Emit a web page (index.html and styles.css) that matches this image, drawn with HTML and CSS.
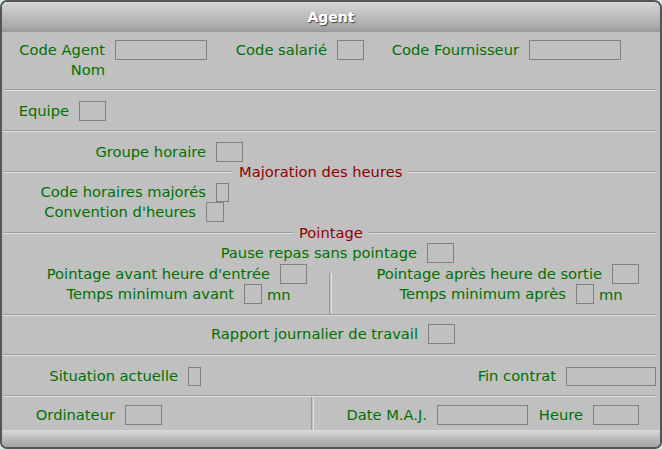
FILE: index.html
```html
<!DOCTYPE html>
<html lang="fr">
<head>
    <meta charset="UTF-8">
    <title>Agent</title>
    <link rel="stylesheet" href="styles.css">
</head>
<body>
    <div class="window">
        <div class="titlebar">Agent</div>

        <div class="section sec-ident">
            <div class="row">
                <span class="lbl w-agent">Code Agent</span><span class="box b-long"></span>
                <span class="lbl w-salarie">Code salarié</span><span class="box b-short"></span>
                <span class="lbl w-fourn">Code Fournisseur</span><span class="box b-long"></span>
            </div>
            <div class="row">
                <span class="lbl w-agent">Nom</span>
            </div>
        </div>
        <div class="sep"></div>

        <div class="section sec-equipe">
            <div class="row">
                <span class="lbl w-equipe">Equipe</span><span class="box b-short"></span>
            </div>
        </div>
        <div class="sep"></div>

        <div class="section sec-horaire">
            <div class="row">
                <span class="lbl w-groupe">Groupe horaire</span><span class="box b-short"></span>
            </div>
            <div class="legend">
                <div class="line l-major"></div><span class="legend-text">Majoration des heures</span><div class="line l-rest"></div>
            </div>
            <div class="row">
                <span class="lbl w-groupe">Code horaires majorés</span><span class="box b-tiny"></span>
            </div>
            <div class="row">
                <span class="lbl w-convention">Convention d'heures</span><span class="box b-mini"></span>
            </div>
            <div class="legend legend-tall">
                <div class="line l-point"></div><span class="legend-text">Pointage</span><div class="line l-rest"></div>
            </div>
            <div class="row">
                <span class="lbl w-pause">Pause repas sans pointage</span><span class="box b-short"></span>
            </div>
            <div class="cols">
                <div class="col col-left">
                    <div class="row row-tall">
                        <span class="lbl w-avant">Pointage avant heure d'entrée</span><span class="box b-short"></span>
                    </div>
                    <div class="row">
                        <span class="lbl w-minavant">Temps minimum avant</span><span class="box b-mini"></span><span class="unit">mn</span>
                    </div>
                </div>
                <div class="vdiv vdiv-point"></div>
                <div class="col">
                    <div class="row row-tall">
                        <span class="lbl w-apres">Pointage après heure de sortie</span><span class="box b-short"></span>
                    </div>
                    <div class="row">
                        <span class="lbl w-minapres">Temps minimum après</span><span class="box b-mini"></span><span class="unit">mn</span>
                    </div>
                </div>
            </div>
        </div>
        <div class="sep"></div>

        <div class="section sec-rapport">
            <div class="row">
                <span class="lbl w-rapport">Rapport journalier de travail</span><span class="box b-short"></span>
            </div>
        </div>
        <div class="sep"></div>

        <div class="section sec-situation">
            <div class="row">
                <span class="lbl w-situation">Situation actuelle</span><span class="box b-tiny"></span>
                <span class="lbl w-fin">Fin contrat</span><span class="box b-fin"></span>
            </div>
        </div>
        <div class="sep"></div>

        <div class="footer-row">
            <div class="foot-left">
                <span class="lbl w-ordi">Ordinateur</span><span class="box b-ordi"></span>
            </div>
            <div class="vdiv"></div>
            <div class="foot-right">
                <span class="lbl w-date">Date M.A.J.</span><span class="box b-date"></span>
                <span class="lbl w-heure">Heure</span><span class="box b-heure"></span>
            </div>
        </div>

        <div class="bottombar"></div>
    </div>
</body>
</html>
```

FILE: styles.css
```css
body {
    margin: 0;
    background-color: #d4ecec;
    font-family: "DejaVu Sans", Verdana, sans-serif;
    font-size: 14.7px;
}
.window {
    width: 662px;
    height: 449px;
    box-sizing: border-box;
    border: 2px solid #555;
    border-radius: 7px 8px 7px 7px;
    background-color: #c0c0c0;
    display: flex;
    flex-direction: column;
    overflow: hidden;
}
.titlebar {
    height: 30px;
    flex: none;
    line-height: 30px;
    text-align: center;
    font-weight: bold;
    font-size: 14px;
    color: #fff;
    text-shadow: 1px 1px 1px #444;
    background: linear-gradient(#d6d6d6, #a8a8a8 85%, #989898);
}
.section {
    flex: none;
    box-sizing: border-box;
}
.sec-ident {
    height: 57px;
    padding-top: 8px;
}
.sec-equipe {
    height: 39px;
    padding-top: 10px;
}
.sec-horaire {
    height: 182px;
    padding-top: 10px;
}
.sec-rapport {
    height: 38px;
    padding-top: 8px;
}
.sec-situation {
    height: 39px;
    padding-top: 10px;
}
.sep {
    flex: none;
    margin: 0 3px 0 2px;
    border-top: 1px solid #999;
    border-bottom: 1px solid #e2e2e2;
}
.row {
    display: flex;
    align-items: center;
    height: 20px;
}
.row-tall {
    height: 21px;
}
.lbl {
    color: #007000;
    text-align: right;
    white-space: nowrap;
    margin-right: 10px;
    line-height: 20px;
}
.box {
    box-sizing: border-box;
    height: 20px;
    border: 1px solid #808080;
    flex: none;
}
.unit {
    color: #007000;
    margin-left: 5px;
}

/* label widths */
.w-agent { width: 103px; }
.w-salarie { width: 120px; }
.w-fourn { width: 155px; }
.w-equipe { width: 67px; }
.w-groupe { width: 204px; }
.w-convention { width: 194px; }
.w-pause { width: 415px; }
.w-avant { width: 268px; }
.w-minavant { width: 232px; }
.w-apres { width: 270px; }
.w-minapres { width: 234px; }
.w-rapport { width: 416px; }
.w-situation { width: 176px; }
.w-fin { width: 355px; }
.w-ordi { width: 113px; }
.w-date { width: 113px; }
.w-heure { width: 55px; }

/* box widths */
.b-long { width: 92px; }
.b-short { width: 27px; }
.b-mini { width: 18px; }
.b-tiny { width: 13px; height: 19px; }
.b-fin { width: 90px; height: 19px; }
.b-ordi { width: 37px; }
.b-date { width: 91px; }
.b-heure { width: 46px; }

.legend {
    display: flex;
    align-items: center;
    height: 20px;
    margin-right: 3px;
}
.legend-tall {
    height: 21px;
}
.legend-text {
    color: #900000;
    padding: 0 6px;
    line-height: 20px;
}
.line {
    height: 0;
    border-top: 1px solid #999;
    border-bottom: 1px solid #e2e2e2;
}
.l-major {
    width: 229px;
    margin-left: 2px;
}
.l-point {
    width: 289px;
    margin-left: 2px;
}
.l-rest {
    flex: 1;
}
.cols {
    display: flex;
    height: 51px;
}
.col-left {
    width: 327px;
}
.vdiv {
    width: 1px;
    flex: none;
    border-left: 1px solid #999;
    border-right: 1px solid #e2e2e2;
}
.vdiv-point {
    margin-top: 10px;
}
.footer-row {
    flex: none;
    display: flex;
    height: 33px;
}
.foot-left,
.foot-right {
    display: flex;
    align-items: flex-start;
    padding-top: 8px;
    height: 20px;
}
.foot-left {
    width: 309px;
}
.bottombar {
    flex: 1;
    background: linear-gradient(#dadada, #b4b4b4 60%, #a6a6a6);
}
```
